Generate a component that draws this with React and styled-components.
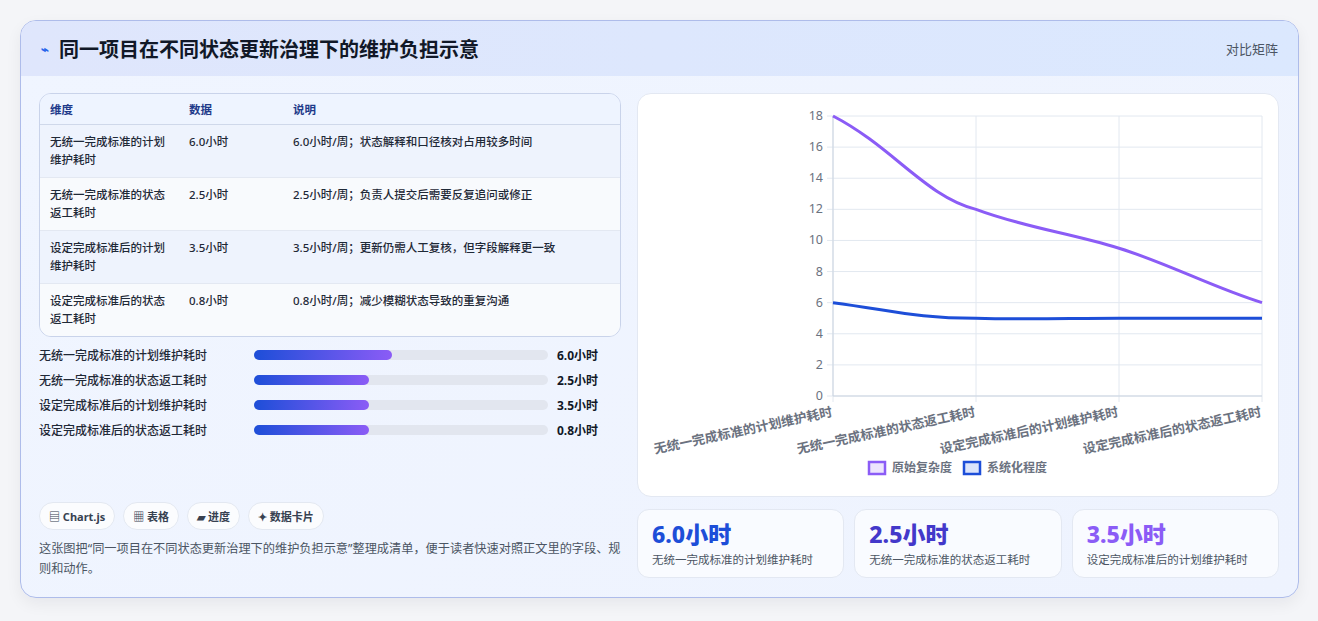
import styled, { createGlobalStyle } from "styled-components";

const Global = createGlobalStyle`
  body {
    margin: 0;
    background: #f4f5f8;
    font-family: "Noto Sans", "Noto Sans CJK SC", sans-serif;
  }
`;

const rows = [
  ["无统一完成标准的计划维护耗时", "6.0小时", "6.0小时/周；状态解释和口径核对占用较多时间"],
  ["无统一完成标准的状态返工耗时", "2.5小时", "2.5小时/周；负责人提交后需要反复追问或修正"],
  ["设定完成标准后的计划维护耗时", "3.5小时", "3.5小时/周；更新仍需人工复核，但字段解释更一致"],
  ["设定完成标准后的状态返工耗时", "0.8小时", "0.8小时/周；减少模糊状态导致的重复沟通"],
];
const barWidths = [47, 39, 39, 39];

const App = () => (
  <>
    <Global />
    <Page>
      <Card>
        <Header>
          <Title>
            <Spark>⌁</Spark>同一项目在不同状态更新治理下的维护负担示意
          </Title>
          <Tag>对比矩阵</Tag>
        </Header>
        <Body>
          <Left>
            <Table>
              <colgroup>
                <col style={{ width: 139 }} />
                <col style={{ width: 104 }} />
                <col />
              </colgroup>
              <thead>
                <tr>
                  <Th>维度</Th>
                  <Th>数据</Th>
                  <Th>说明</Th>
                </tr>
              </thead>
              <tbody>
                {rows.map((r, i) => (
                  <Tr key={i} $alt={i % 2 === 1}>
                    <Td>{r[0]}</Td>
                    <Td>{r[1]}</Td>
                    <Td>{r[2]}</Td>
                  </Tr>
                ))}
              </tbody>
            </Table>
            <Bars>
              {rows.map((r, i) => (
                <BarRow key={i}>
                  <BarLabel>{r[0]}</BarLabel>
                  <Track>
                    <Fill style={{ width: `${barWidths[i]}%` }} />
                  </Track>
                  <BarValue>{r[1]}</BarValue>
                </BarRow>
              ))}
            </Bars>
            <Chips>
              <Chip>▤ Chart.js</Chip>
              <Chip>▦ 表格</Chip>
              <Chip>▰ 进度</Chip>
              <Chip>✦ 数据卡片</Chip>
            </Chips>
            <Note>
              这张图把“同一项目在不同状态更新治理下的维护负担示意”整理成清单，便于读者快速对照正文里的字段、规则和动作。
            </Note>
          </Left>
          <Right>
            <ChartCard>
              <Chart />
            </ChartCard>
            <Stats>
              <Stat>
                <StatValue $c="#1d4ed8">6.0小时</StatValue>
                <StatLabel>无统一完成标准的计划维护耗时</StatLabel>
              </Stat>
              <Stat>
                <StatValue $c="#4338ca">2.5小时</StatValue>
                <StatLabel>无统一完成标准的状态返工耗时</StatLabel>
              </Stat>
              <Stat>
                <StatValue $c="#8b5cf6">3.5小时</StatValue>
                <StatLabel>设定完成标准后的计划维护耗时</StatLabel>
              </Stat>
            </Stats>
          </Right>
        </Body>
      </Card>
    </Page>
  </>
);

const Chart = () => {
  const L = 195, T = 22, R = 624, B = 302;
  const xs = [0, 1, 2, 3].map((i) => L + ((R - L) / 3) * i);
  const y = (v) => B - ((B - T) * v) / 18;
  const labels = rows.map((r) => r[0]);
  return (
    <svg width="642" height="402" viewBox="0 0 642 402" fontFamily="Noto Sans, Noto Sans CJK SC, sans-serif">
      {[0, 2, 4, 6, 8, 10, 12, 14, 16, 18].map((v) => (
        <g key={v}>
          <line x1={L - 6} x2={R} y1={y(v)} y2={y(v)} stroke="#e2e8f0" />
          <text x={L - 10} y={y(v) + 4} fontSize="12.5" fill="#6b7280" textAnchor="end">{v}</text>
        </g>
      ))}
      {xs.map((x, i) => (
        <line key={i} x1={x} x2={x} y1={T} y2={B + 6} stroke="#e2e8f0" />
      ))}
      <line x1={L} x2={L} y1={T} y2={B} stroke="#cbd5e1" />
      <line x1={L} x2={R} y1={B} y2={B} stroke="#cbd5e1" />
      <path
        d={`M${xs[0]},${y(18)} C${xs[0] + 60},${y(16)} ${xs[1] - 50},${y(12.8)} ${xs[1]},${y(12)} C${xs[1] + 50},${y(10.8)} ${xs[2] - 50},${y(10.5)} ${xs[2]},${y(9.5)} C${xs[2] + 50},${y(8.5)} ${xs[3] - 50},${y(7)} ${xs[3]},${y(6)}`}
        fill="none" stroke="#8b5cf6" strokeWidth="3"
      />
      <path
        d={`M${xs[0]},${y(6)} C${xs[0] + 60},${y(5.5)} ${xs[1] - 60},${y(5)} ${xs[1]},${y(5)} C${xs[1] + 50},${y(4.9)} ${xs[2] - 50},${y(5)} ${xs[2]},${y(5)} L${xs[3]},${y(5)}`}
        fill="none" stroke="#1d4ed8" strokeWidth="3"
      />
      {xs.map((x, i) => (
        <text key={i} x={x} y={B + 20} fontSize="13" fontWeight="600" fill="#6b7280" textAnchor="end" transform={`rotate(-12 ${x} ${B + 20})`}>
          {labels[i]}
        </text>
      ))}
      <rect x="231" y="368" width="16" height="12" fill="#ede4fd" stroke="#8b5cf6" strokeWidth="2.5" />
      <text x="254" y="378" fontSize="12" fontWeight="600" fill="#6b7280">原始复杂度</text>
      <rect x="326" y="368" width="16" height="12" fill="#dbe4fb" stroke="#1d4ed8" strokeWidth="2.5" />
      <text x="349" y="378" fontSize="12" fontWeight="600" fill="#6b7280">系统化程度</text>
    </svg>
  );
};

export default App;

const Page = styled.div`
  padding: 20px;
`;

const Card = styled.div`
  width: 1277px;
  border: 1px solid #aebcea;
  border-radius: 16px;
  overflow: hidden;
  background: linear-gradient(135deg, #f0f5ff, #eef3fe);
  box-shadow: 0 6px 16px rgba(15, 23, 42, 0.06);
`;

const Header = styled.div`
  height: 55px;
  display: flex;
  align-items: center;
  justify-content: space-between;
  padding: 0 20px;
  background: linear-gradient(90deg, #dfe6fc, #dbe8fe);
`;

const Title = styled.h1`
  margin: 0;
  font-size: 20px;
  font-weight: 700;
  color: #111827;
  display: flex;
  align-items: center;
  gap: 10px;
`;

const Spark = styled.span`
  color: #2563eb;
  font-size: 13px;
`;

const Tag = styled.span`
  font-size: 13px;
  color: #4b5563;
`;

const Body = styled.div`
  display: flex;
  gap: 16px;
  padding: 17px 18px 18px 18px;
`;

const Left = styled.div`
  width: 582px;
  display: flex;
  flex-direction: column;
`;

const Table = styled.table`
  width: 100%;
  table-layout: fixed;
  border-collapse: separate;
  border-spacing: 0;
  border: 1px solid #c9d3ea;
  border-radius: 12px;
  overflow: hidden;
  font-size: 11.5px;
  font-weight: 500;
  color: #1f2937;
`;

const Th = styled.th`
  text-align: left;
  font-weight: 700;
  color: #1e3a8a;
  padding: 7px 10px;
  background: #eef4ff;
  border-bottom: 1px solid #cfd8ea;
`;

const Tr = styled.tr`
  background: ${(p) => (p.$alt ? "#f8fafd" : "#eef3fd")};
  & td { border-bottom: 1px solid #e3e8f2; }
  &:last-child td { border-bottom: none; }
`;

const Td = styled.td`
  padding: 8px 10px;
  vertical-align: top;
  line-height: 18px;
  height: 36px;
`;

const Bars = styled.div`
  display: flex;
  flex-direction: column;
  gap: 7px;
  margin-top: 9px;
`;

const BarRow = styled.div`
  display: grid;
  grid-template-columns: 215px 303px 1fr;
  align-items: center;
  font-size: 12px;
  font-weight: 500;
  height: 18px;
`;

const BarLabel = styled.span`
  color: #1f2937;
`;

const Track = styled.div`
  height: 10px;
  border-radius: 5px;
  background: #e2e6ef;
  margin-right: 9px;
`;

const Fill = styled.div`
  height: 100%;
  border-radius: 5px;
  background: linear-gradient(90deg, #1d4ed8, #8b5cf6);
`;

const BarValue = styled.span`
  font-weight: 700;
  color: #111827;
`;

const Chips = styled.div`
  display: flex;
  gap: 8px;
  margin-top: 63px;
`;

const Chip = styled.span`
  padding: 5px 9px;
  border-radius: 14px;
  background: #fbfcfe;
  border: 1px solid #e3e8f1;
  font-size: 11px;
  font-weight: 700;
  color: #374151;
`;

const Note = styled.p`
  margin: 9px 0 0;
  font-size: 12.2px;
  line-height: 20px;
  color: #4b5563;
`;

const Right = styled.div`
  width: 642px;
  display: flex;
  flex-direction: column;
  gap: 12px;
`;

const ChartCard = styled.div`
  height: 402px;
  background: #fff;
  border: 1px solid #e3e8f2;
  border-radius: 14px;
  overflow: hidden;
`;

const Stats = styled.div`
  display: grid;
  grid-template-columns: repeat(3, 1fr);
  gap: 10px;
`;

const Stat = styled.div`
  background: #f9fbff;
  border: 1px solid #e3e8f2;
  border-radius: 12px;
  padding: 9px 14px 10px;
`;

const StatValue = styled.div`
  font-size: 23px;
  font-weight: 800;
  color: ${(p) => p.$c};
  line-height: 30px;
`;

const StatLabel = styled.div`
  margin-top: 2px;
  font-size: 11.5px;
  color: #4b5563;
`;
